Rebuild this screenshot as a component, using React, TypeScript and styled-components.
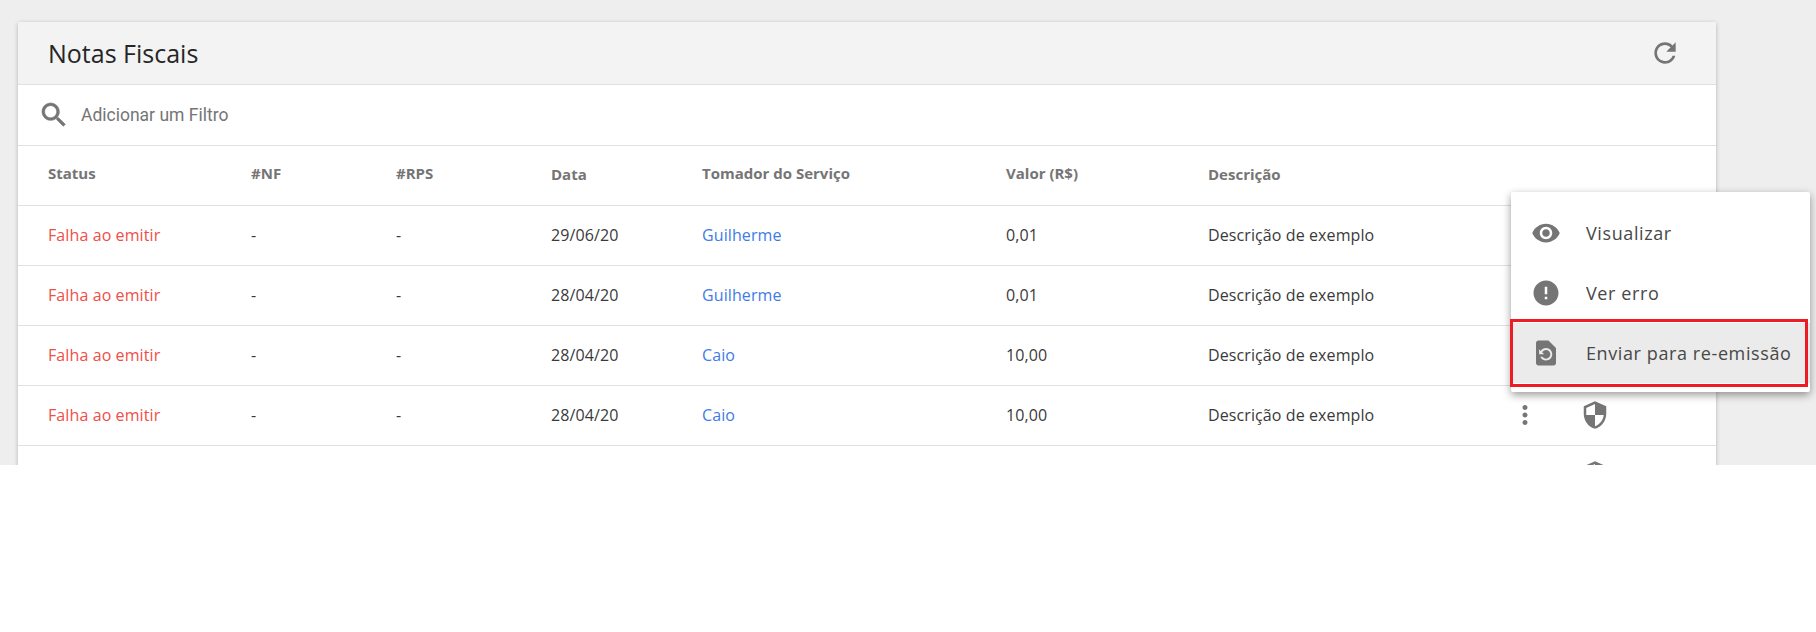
import React from "react";
import styled, { createGlobalStyle } from "styled-components";

const Global = createGlobalStyle`
  html, body { margin: 0; padding: 0; background: #fff; }
  body { font-family: "Open Sans", "Liberation Sans", sans-serif; }
`;

const Stage = styled.div`
  position: relative;
  height: 465px;
  overflow: hidden;
  background: #eeeeee;
  padding: 22px 0 0 18px;
  box-sizing: border-box;
`;

const Card = styled.section`
  width: 1698px;
  background: #fff;
  box-shadow: 0 1px 4px rgba(0, 0, 0, 0.25);
  border-radius: 2px;
`;

const Header = styled.header`
  height: 62px;
  display: flex;
  align-items: center;
  justify-content: space-between;
  padding: 0 35px 0 30px;
  background: #f3f3f3;
  border-bottom: 1px solid #e0e0e0;
`;

const Title = styled.h1`
  margin: 0;
  font-size: 25px;
  font-weight: 400;
  color: #262626;
`;

const FilterBar = styled.div`
  height: 60px;
  display: flex;
  align-items: center;
  padding-left: 20px;
  gap: 11px;
  border-bottom: 1px solid #e0e0e0;
`;

const FilterLabel = styled.span`
  font-family: Roboto, "Liberation Sans", sans-serif;
  font-size: 17.5px;
  color: #757575;
`;

const Icon = styled.svg<{ $size?: number; $heavy?: boolean }>`
  width: ${(p) => p.$size ?? 30}px;
  height: ${(p) => p.$size ?? 30}px;
  fill: #757575;
  stroke: #757575;
  stroke-width: ${(p) => (p.$heavy ? 0.45 : 0)};
  display: block;
  flex: none;
`;

const columns = "203px 145px 155px 151px 304px 202px 302px 70px 1fr";

const HeadRow = styled.div`
  display: grid;
  grid-template-columns: ${columns};
  align-items: center;
  height: 59px;
  padding-left: 30px;
  border-bottom: 1px solid #e0e0e0;
`;

const HeadCell = styled.div<{ $low?: boolean }>`
  font-size: 15px;
  font-weight: 700;
  color: #757575;
  padding-bottom: ${(p) => (p.$low ? "4px" : "6px")};
`;

const Row = styled.div`
  display: grid;
  grid-template-columns: ${columns};
  align-items: center;
  height: 59px;
  border-bottom: 1px solid #e0e0e0;
  padding-left: 30px;

  & > svg {
    margin-bottom: 1px;
  }
`;

const Cell = styled.div<{ $tone?: "error" | "link" }>`
  font-size: 16px;
  letter-spacing: 0.1px;
  padding-bottom: 2px;
  color: ${(p) =>
    p.$tone === "error" ? "#f04e48" : p.$tone === "link" ? "#3f7be8" : "#3a3a3a"};
`;

const ClippedCells = styled.div`
  grid-column: span 7;
`;

const Menu = styled.div`
  position: absolute;
  left: 1511px;
  top: 192px;
  width: 299px;
  height: 200px;
  box-sizing: border-box;
  padding-top: 11px;
  background: #fff;
  border-radius: 2px;
  box-shadow: 0 3px 8px rgba(0, 0, 0, 0.4);
`;

const MenuItem = styled.div<{ $active?: boolean }>`
  height: 60px;
  display: flex;
  align-items: center;
  gap: 25px;
  padding-left: 20px;
  background: ${(p) => (p.$active ? "#ebebeb" : "transparent")};
  font-size: 18px;
  letter-spacing: 0.6px;
  color: #484848;
`;

const Highlight = styled.div`
  position: absolute;
  left: -1px;
  top: 127px;
  width: 298px;
  height: 68px;
  box-sizing: border-box;
  border: 3px solid #ed1c24;
`;

const p = {
  search: "M15.5 14h-.79l-.28-.27C15.41 12.59 16 11.11 16 9.5 16 5.91 13.09 3 9.5 3S3 5.91 3 9.5 5.91 16 9.5 16c1.61 0 3.09-.59 4.23-1.57l.27.28v.79l5 4.99L20.49 19l-4.99-5zm-6 0C7.01 14 5 11.99 5 9.5S7.01 5 9.5 5 14 7.01 14 9.5 11.99 14 9.5 14z",
  refresh: "M17.65 6.35C16.2 4.9 14.21 4 12 4c-4.42 0-7.99 3.58-7.99 8s3.57 8 7.99 8c3.73 0 6.84-2.55 7.73-6h-2.08c-.82 2.33-3.04 4-5.65 4-3.31 0-6-2.69-6-6s2.69-6 6-6c1.66 0 3.14.69 4.22 1.78L13 11h7V4l-2.35 2.35z",
  more: "M12 8c1.1 0 2-.9 2-2s-.9-2-2-2-2 .9-2 2 .9 2 2 2zm0 2c-1.1 0-2 .9-2 2s.9 2 2 2 2-.9 2-2-.9-2-2-2zm0 6c-1.1 0-2 .9-2 2s.9 2 2 2 2-.9 2-2-.9-2-2-2z",
  shield: "M12 1L3 5v6c0 5.55 3.84 10.74 9 12 5.16-1.26 9-6.45 9-12V5l-9-4zm0 10.99h7c-.53 4.12-3.28 7.79-7 8.94V12H5V6.3l7-3.11v8.8z",
  eye: "M12 4.5C7 4.5 2.73 7.61 1 12c1.73 4.39 6 7.5 11 7.5s9.27-3.11 11-7.5c-1.73-4.39-6-7.5-11-7.5zM12 17c-2.76 0-5-2.24-5-5s2.24-5 5-5 5 2.24 5 5-2.24 5-5 5zm0-8c-1.66 0-3 1.34-3 3s1.34 3 3 3 3-1.34 3-3-1.34-3-3-3z",
  error: "M12 2C6.48 2 2 6.48 2 12s4.48 10 10 10 10-4.48 10-10S17.52 2 12 2zm1 15h-2v-2h2v2zm0-4h-2V7h2v6z",
  restore: "M14 2H6c-1.1 0-1.99.9-1.99 2L4 20c0 1.1.89 2 1.99 2H18c1.1 0 2-.9 2-2V8l-6-6zm-2 16c-2.05 0-3.81-1.24-4.58-3h1.71c.63.9 1.68 1.5 2.87 1.5 1.93 0 3.5-1.57 3.5-3.5S13.93 9.5 12 9.5c-1.35 0-2.52.78-3.1 1.9l1.6 1.6h-4V9l1.3 1.3C8.69 8.92 10.23 8 12 8c2.76 0 5 2.24 5 5s-2.24 5-5 5z",
};

const Glyph = ({ d, size, heavy }: { d: string; size?: number; heavy?: boolean }) => (
  <Icon $size={size} $heavy={heavy} viewBox="0 0 24 24"><path d={d} /></Icon>
);

const heads: [string, boolean][] = [
  ["Status", false], ["#NF", false], ["#RPS", false], ["Data", true],
  ["Tomador do Serviço", false], ["Valor (R$)", false], ["Descrição", true],
];

const rows = [
  ["29/06/20", "Guilherme", "0,01"],
  ["28/04/20", "Guilherme", "0,01"],
  ["28/04/20", "Caio", "10,00"],
  ["28/04/20", "Caio", "10,00"],
];

export default function App() {
  return (
    <>
      <Global />
      <Stage>
        <Card>
          <Header>
            <Title>Notas Fiscais</Title>
            <Glyph d={p.refresh} size={32} />
          </Header>
          <FilterBar>
            <Glyph d={p.search} size={32} heavy />
            <FilterLabel>Adicionar um Filtro</FilterLabel>
          </FilterBar>
          <HeadRow>
            {heads.map(([h, low]) => <HeadCell key={h} $low={low}>{h}</HeadCell>)}
          </HeadRow>
          {rows.map(([date, who, value], i) => (
            <Row key={i}>
              <Cell $tone="error">Falha ao emitir</Cell>
              <Cell>-</Cell>
              <Cell>-</Cell>
              <Cell>{date}</Cell>
              <Cell $tone="link">{who}</Cell>
              <Cell>{value}</Cell>
              <Cell>Descrição de exemplo</Cell>
              <Glyph d={p.more} />
              <Glyph d={p.shield} />
            </Row>
          ))}
          <Row>
            <ClippedCells />
            <Glyph d={p.more} />
            <Glyph d={p.shield} />
          </Row>
        </Card>
        <Menu>
          <MenuItem><Glyph d={p.eye} />Visualizar</MenuItem>
          <MenuItem><Glyph d={p.error} />Ver erro</MenuItem>
          <MenuItem $active><Glyph d={p.restore} />Enviar para re-emissão</MenuItem>
          <Highlight />
        </Menu>
      </Stage>
    </>
  );
}
